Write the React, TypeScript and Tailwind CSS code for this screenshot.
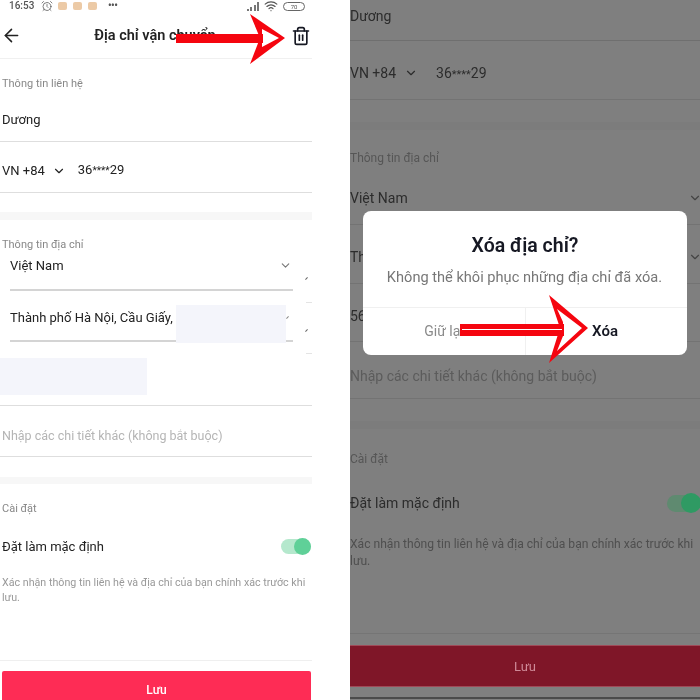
import { AlarmClock, ArrowLeft, ChevronDown, Trash2, Wifi } from 'lucide-react';

const font = { fontFamily: 'Roboto, sans-serif' };

const Arrow = ({ className, shaft, head, inner, line }: { className: string; shaft: string; head: string; inner: string; line?: string }) => (
  <svg className={className} viewBox="0 0 700 700" fill="none">
    <path d={head} fill="#f5050f" />
    <path d={inner} fill="#fff" />
    <path d={shaft} fill="#f5050f" />
    {line && <path d={line} stroke="#fff" strokeWidth="1.2" />}
  </svg>
);

const StatusBar = () => (
  <div className="h-3 flex items-center pl-[9px] pr-[45px] gap-[5px] text-[#555]">
    <span className="text-[10px] font-medium leading-3 w-[27px]">16:53</span>
    <AlarmClock size={12} strokeWidth={1.5} />
    <div className="w-[9px] h-[8px] rounded-[2px] bg-[#eccaa6]" />
    <div className="ml-px w-[9px] h-[8px] rounded-[2px] bg-[#eccaa6]" />
    <div className="ml-px w-[9px] h-[8px] rounded-[2px] bg-[#eccaa6]" />
    <span className="ml-[6px] text-[10px] leading-[6px] tracking-tighter font-bold">•••</span>
    <div className="ml-auto flex items-end gap-[1.5px] h-[9px]">
      <div className="w-[2px] h-[2px] bg-[#777]" />
      <div className="w-[2px] h-[4px] bg-[#777]" />
      <div className="w-[2px] h-[6px] bg-[#777]" />
      <div className="w-[2px] h-[9px] bg-[#777]" />
    </div>
    <Wifi size={14} strokeWidth={2} />
    <div className="w-[22px] h-[9px] rounded-full border border-[#666] text-[6px] leading-[7px] text-center">70</div>
  </div>
);

const Left = () => (
  <div className="relative w-[350px] h-[700px] shrink-0 overflow-hidden bg-white text-[#222] blur-[0.4px]">
    <StatusBar />
    <div className="w-[312px] h-[47px] pl-px flex items-center justify-between border-b border-[#f0f0f0]">
      <ArrowLeft size={21} strokeWidth={1.8} className="text-[#222]" />
      <span className="text-[14.5px] font-semibold pt-[2px] pr-[3px]">Địa chỉ vận chuyển</span>
      <Trash2 size={20} strokeWidth={2} className="text-[#161823] mt-[2px] mr-[1px]" />
    </div>

    <div className="w-[312px]">
      <p className="pt-[18px] pl-[2px] text-[11px] leading-[14px] text-[#888]">Thông tin liên hệ</p>
      <div className="h-[51px] pl-[2px] pb-[11px] flex items-end border-b border-[#dedede] text-[13px] leading-5">Dương</div>
      <div className="h-[51px] pl-[2px] pb-[11px] flex items-end border-b border-[#dedede] text-[13px] leading-5">
        <span>VN +84</span>
        <ChevronDown size={14} className="ml-[7px] mb-[3px]" />
        <span className="ml-[12px]">36<span className="text-[10px]">****</span>29</span>
      </div>
      <div className="mt-[19px] h-2 bg-[#f7f7f7]" />
      <p className="pt-[18px] pl-[2px] text-[11px] leading-[14px] text-[#888]">Thông tin địa chỉ</p>
      <div className="ml-[10px] mr-[19px] h-[39px] pb-[13px] flex items-end justify-between border-b-2 border-[#d4d4d4] text-[13px] leading-5">
        <span>Việt Nam</span>
        <ChevronDown size={13} className="text-[#777] mr-[1px] mb-[4px]" />
      </div>
      <div className="ml-[10px] mr-[19px] h-[51px] pb-[12px] flex items-end border-b-2 border-[#d4d4d4] text-[13px] leading-5">
        Thành phố Hà Nội, Cầu Giấy,
      </div>
      <div className="h-[64px] border-b border-[#dedede]" />
      <div className="h-[51px] pl-[2px] pb-[10px] flex items-end border-b border-[#dedede] text-[12.5px] leading-5 text-[#b5b5b5]">
        Nhập các chi tiết khác (không bắt buộc)
      </div>
      <div className="mt-5 h-[7px] bg-[#f7f7f7]" />
      <p className="pt-[18px] pl-[2px] text-[11px] leading-[14px] text-[#888]">Cài đặt</p>
      <div className="mt-[21px] pl-[2px] flex items-center justify-between text-[13px] leading-5">
        <span>Đặt làm mặc định</span>
        <div className="mr-px mb-[2px] w-[30px] h-[15px] rounded-full bg-[#b5e8cd] flex justify-end items-center">
          <div className="w-[17px] h-[17px] rounded-full bg-[#5fd098] shrink-0" />
        </div>
      </div>
      <p className="mt-[18px] pl-[2px] text-[10.7px] leading-[15px] text-[#999]">
        Xác nhận thông tin liên hệ và địa chỉ của bạn chính xác trước khi lưu.
      </p>
      <div className="mt-[55px] h-px bg-[#efefef]" />
      <div className="mt-[10px] ml-[2px] mr-px h-[40px] rounded-t-[2px] bg-[#fe2c55] pt-[11px] text-center text-white text-[12px] font-medium leading-4">Lưu</div>
    </div>

    {/* retouched areas laid over the address */}
    <div className="absolute left-[176px] top-[305px] w-[110px] h-[38px] bg-[#f4f5fb]" />
    <div className="absolute left-0 top-[358px] w-[147px] h-[37px] bg-[#f4f5fb]" />
    <div className="absolute left-[306px] top-[302px] w-[6px] h-px bg-[#e4e4e4]" />
    <div className="absolute left-[306px] top-[353px] w-[6px] h-px bg-[#e4e4e4]" />
    <div className="absolute left-[305px] top-[278px] w-[3px] h-px -rotate-45 bg-[#666]" />
    <div className="absolute left-[305px] top-[330px] w-[3px] h-px -rotate-45 bg-[#666]" />
    <div className="absolute left-[286px] top-[317px] w-[3px] h-px -rotate-45 bg-[#888]" />
  </div>
);

const Right = () => (
  <div className="relative w-[350px] h-[700px] shrink-0 overflow-hidden bg-[#7f7f7f] text-[#2c2c2c] blur-[0.4px]">
    <div className="h-[41px] pb-[14px] flex items-end border-b border-[#6f6f6f] text-[14px] leading-5">Dương</div>
    <div className="h-[59px] pb-4 flex items-end border-b border-[#737373] text-[14px] leading-5">
      <span>VN +84</span>
      <ChevronDown size={14} className="ml-[8px] mb-[3px]" />
      <span className="ml-[18px] -mb-[2px]">36<span className="text-[11px]">****</span>29</span>
    </div>
    <div className="mt-[22px] h-2 bg-[#7c7c7c]" />
    <p className="pt-5 text-[12px] leading-4 text-[#565656]">Thông tin địa chỉ</p>
    <div className="h-[59px] pb-4 pr-px flex items-end justify-between border-b border-[#737373] text-[14px] leading-5">
      <span>Việt Nam</span>
      <ChevronDown size={14} className="text-[#444] mb-[3px] -mr-[3px]" />
    </div>
    <div className="h-[59px] pb-4 pr-px flex items-end justify-between border-b border-[#737373] text-[14px] leading-5">
      <span>Thành phố</span>
      <ChevronDown size={14} className="text-[#444] mb-[3px] -mr-[3px]" />
    </div>
    <div className="h-[58px] pb-[15px] flex items-end border-b border-[#737373] text-[14px] leading-5">56</div>
    <div className="h-[57px] pb-3 flex items-end border-b border-[#737373] text-[14px] leading-5 text-[#5c5c5c]">
      Nhập các chi tiết khác (không bắt buộc)
    </div>
    <div className="mt-[22px] h-2 bg-[#7c7c7c]" />
    <p className="pt-[22px] text-[12px] leading-4 text-[#565656]">Cài đặt</p>
    <div className="mt-[26px] flex items-center justify-between text-[14px] leading-5">
      <span>Đặt làm mặc định</span>
      <div className="w-[33px] h-[17px] rounded-full bg-[#5f8a70] flex items-center">
        <div className="ml-[14px] w-[20px] h-[20px] rounded-full bg-[#2f9a63] shrink-0" />
      </div>
    </div>
    <p className="mt-[23px] pr-[3px] text-[12.1px] leading-[17px] text-[#4f4f4f]">
      Xác nhận thông tin liên hệ và địa chỉ của bạn chính xác trước khi lưu.
    </p>
    <div className="mt-[63px] h-px bg-[#757575]" />
    <div className="mt-[11px] h-[42px] border-t border-[#a04a58] border-b bg-[#7f1628] pt-[11px] text-center text-[13px] leading-5 text-[#cf8a98]">Lưu</div>
    <div className="mt-[10px] h-[2px] bg-[#4a4a4a]" />

    {/* dialog */}
    <div className="absolute left-[13px] top-[211px] w-[324px] h-[144px] rounded-lg bg-white flex flex-col">
      <h2 className="pt-[23px] text-center text-[19.5px] font-semibold leading-6 text-[#161823]">Xóa địa chỉ?</h2>
      <p className="mt-[9px] pr-px text-center text-[14.6px] leading-5 text-[#777]">Không thể khôi phục những địa chỉ đã xóa.</p>
      <div className="mt-5 flex-1 flex border-t border-[#f0f0f0]">
        <div className="w-[162px] flex items-center justify-center text-[14px] text-[#8a8a8a]">Giữ lại</div>
        <div className="flex-1 flex items-center justify-center border-l border-[#f0f0f0] text-[15px] font-semibold text-[#161823] pr-[3px]">Xóa</div>
      </div>
    </div>
  </div>
);

const App = () => (
  <div className="relative w-[700px] h-[700px] flex overflow-hidden bg-white" style={font}>
    <Left />
    <Right />
    <Arrow
      className="absolute inset-0 w-[700px] h-[700px] blur-[0.3px]"
      shaft="M176 34H263V43H176Z"
      head="M250 14L285 38L250 64L260 38Z"
      inner="M262 29L279 38L262 47Z"
    />
    <Arrow
      className="absolute inset-0 w-[700px] h-[700px] blur-[0.3px]"
      shaft="M460 324H564V336H460Z"
      line="M462 329.5H562"
      head="M549 295L588 328L549 363L560 328Z"
      inner="M557 309L582 328L557 351L563 336V322Z"
    />
  </div>
);

export default App;
